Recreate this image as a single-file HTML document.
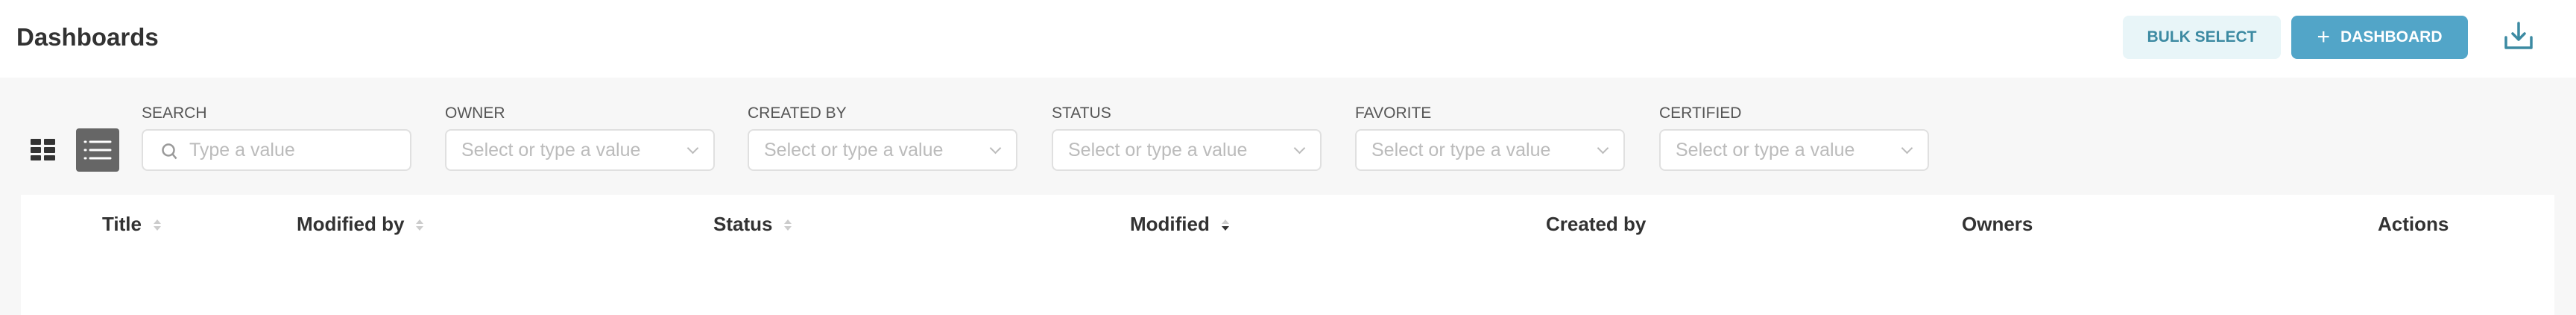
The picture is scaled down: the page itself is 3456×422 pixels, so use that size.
<!DOCTYPE html>
<html><head><style>
*{margin:0;padding:0;box-sizing:border-box}
body{width:3456px;height:422px;background:#f7f7f7;font-family:"Liberation Sans",sans-serif;position:relative;overflow:hidden;color:#323232}
.hdr{position:absolute;left:0;top:0;width:3456px;height:104px;background:#fff}
.t{position:absolute;left:22px;top:31px;font-size:33px;font-weight:bold;color:#323232}
.btn{position:absolute;top:21px;height:58px;border-radius:8px;font-weight:bold;font-size:21px;display:flex;align-items:center;justify-content:center}
.lbl{position:absolute;top:140px;font-size:21px;color:#555}
.inp{position:absolute;top:173px;width:362px;height:56px;background:#fff;border:2px solid #e0e0e0;border-radius:8px;font-size:25px;color:#bbb;line-height:52px;padding-left:20px}
.chev{position:absolute;right:22px;top:18px;width:11px;height:11px;border-right:2px solid #bbb;border-bottom:2px solid #bbb;transform:rotate(45deg)}
.tbl{position:absolute;left:28px;top:261px;width:3399px;height:161px;background:#fff}
.th{position:absolute;top:285px;font-size:26px;font-weight:bold;color:#323232}
.s{display:inline-block;width:10px;height:18px;margin-left:16px;vertical-align:-2px;position:relative}
.s:before{content:"";position:absolute;left:0;top:1px;border-left:5px solid transparent;border-right:5px solid transparent;border-bottom:6px solid #ccc}
.s:after{content:"";position:absolute;left:0;top:10px;border-left:5px solid transparent;border-right:5px solid transparent;border-top:6px solid #ccc}
.s.d:after{border-top-color:#333}
</style></head><body>
<div class="hdr">
<div class="t">Dashboards</div>
<div class="btn" style="left:2848px;width:212px;background:#e8f5f8;color:#3c8aa2">BULK SELECT</div>
<div class="btn" style="left:3074px;width:237px;background:#52a5c8;color:#fff"><span style="font-size:30px;font-weight:normal;margin-right:14px">+</span>DASHBOARD</div>
<svg style="position:absolute;left:3359px;top:28px" width="40" height="40" viewBox="0 0 40 40" fill="none" stroke="#3c8aa2" stroke-width="3.5" stroke-linecap="round" stroke-linejoin="round"><path d="M20 3v22M12 17l8 8 8-8"/><path d="M3 22v14h34V22"/></svg>
</div>
<svg style="position:absolute;left:41px;top:186px" width="33" height="29"><g fill="#333"><rect x="0" y="0" width="14" height="8" rx="1"/><rect x="18" y="0" width="15" height="8" rx="1"/><rect x="0" y="11" width="14" height="8" rx="1"/><rect x="18" y="11" width="15" height="8" rx="1"/><rect x="0" y="22" width="14" height="7" rx="1"/><rect x="18" y="22" width="15" height="7" rx="1"/></g></svg>
<div style="position:absolute;left:102px;top:172px;width:58px;height:58px;background:#666;border-radius:4px"><svg width="58" height="58"><g stroke="#fff" stroke-width="3" stroke-linecap="round"><path d="M12 18h1M12 29h1M12 40h1M19 18h27M19 29h27M19 40h27"/></g></svg></div>
<div class="lbl" style="left:190px">SEARCH</div>
<div class="inp" style="left:190px;padding-left:62px">Type a value<svg style="position:absolute;left:24px;top:16px" width="22" height="24" fill="none" stroke="#999" stroke-width="2.5"><circle cx="10" cy="10" r="7.5"/><path d="M15.5 15.5l5 6"/></svg></div>
<div class="lbl" style="left:597px">OWNER</div><div class="inp" style="left:597px">Select or type a value<i class="chev"></i></div>
<div class="lbl" style="left:1003px">CREATED BY</div><div class="inp" style="left:1003px">Select or type a value<i class="chev"></i></div>
<div class="lbl" style="left:1411px">STATUS</div><div class="inp" style="left:1411px">Select or type a value<i class="chev"></i></div>
<div class="lbl" style="left:1818px">FAVORITE</div><div class="inp" style="left:1818px">Select or type a value<i class="chev"></i></div>
<div class="lbl" style="left:2226px">CERTIFIED</div><div class="inp" style="left:2226px">Select or type a value<i class="chev"></i></div>
<div class="tbl"></div>
<div class="th" style="left:137px">Title<span class="s"></span></div>
<div class="th" style="left:398px">Modified by<span class="s"></span></div>
<div class="th" style="left:957px">Status<span class="s"></span></div>
<div class="th" style="left:1516px">Modified<span class="s d"></span></div>
<div class="th" style="left:2074px">Created by</div>
<div class="th" style="left:2632px">Owners</div>
<div class="th" style="left:3190px">Actions</div>
</body></html>
